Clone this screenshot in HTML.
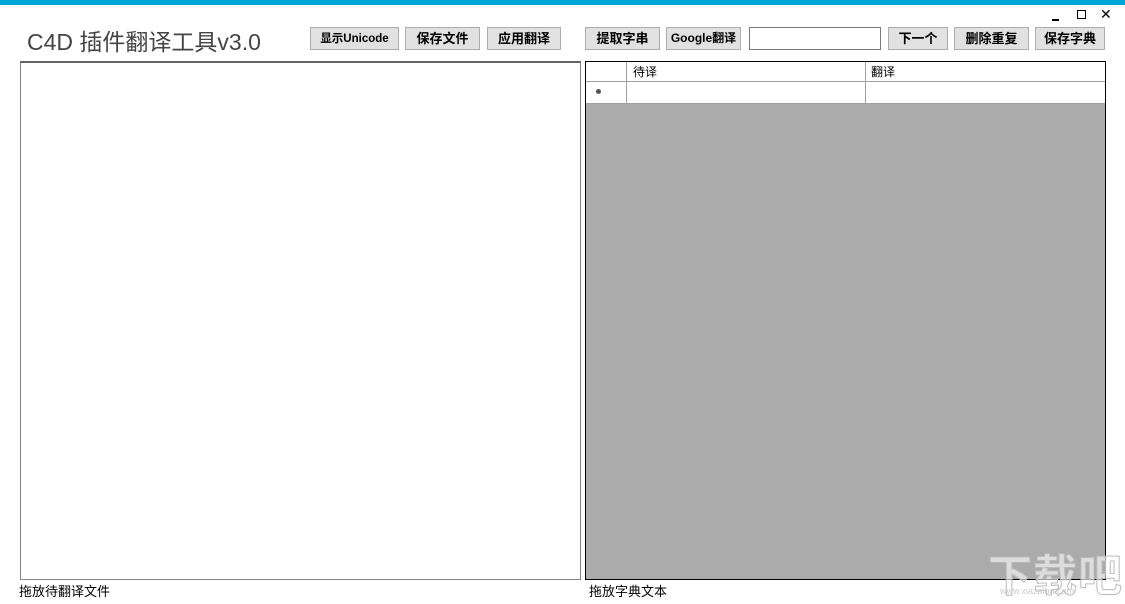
<!DOCTYPE html>
<html><head><meta charset="utf-8"><style>
*{margin:0;padding:0;box-sizing:border-box}
body{width:1125px;height:600px;background:#fff;position:relative;overflow:hidden;font-family:"Liberation Sans","Noto Sans CJK SC",sans-serif}
.a{position:absolute}
.btn{position:absolute;top:27px;height:23px;background:#e1e1e1;border:1px solid #adadad;font-size:13px;font-weight:bold;text-align:center;line-height:21px;color:#000;white-space:nowrap}
.st{font-size:13px;color:#000}
</style></head><body>
<div class="a" style="left:0;top:0;width:1125px;height:5px;background:#02a6d6"></div>
<div class="a" style="left:1052px;top:19px;width:7px;height:2px;background:#000"></div>
<div class="a" style="left:1077px;top:10px;width:9px;height:9px;border:1.5px solid #000"></div>
<div class="a" style="left:1100px;top:6px;font-size:14px">✕</div>
<div class="a" style="left:27px;top:23px;font-size:23px;color:#444;letter-spacing:0px">C4D 插件翻译工具v3.0</div>
<div class="btn" style="left:310px;width:89px;font-size:11.5px;line-height:23px">显示Unicode</div>
<div class="btn" style="left:405px;width:75px">保存文件</div>
<div class="btn" style="left:487px;width:74px">应用翻译</div>
<div class="btn" style="left:585px;width:75px">提取字串</div>
<div class="btn" style="left:666px;width:75px;font-size:12px">Google翻译</div>
<div class="a" style="left:749px;top:27px;width:132px;height:23px;border:1px solid #7a7a7a;background:#fff"></div>
<div class="btn" style="left:888px;width:60px">下一个</div>
<div class="btn" style="left:954px;width:75px">删除重复</div>
<div class="btn" style="left:1035px;width:70px">保存字典</div>
<div class="a" style="left:20px;top:61px;width:561px;height:519px;border:1px solid #828282;border-top:2px solid #646464;background:#fff"></div>
<div class="a" style="left:585px;top:61px;width:521px;height:519px;border:1px solid #000;background:#ababab">
 <div class="a" style="left:0;top:0;width:519px;height:42px;background:#fff"></div>
 <div class="a" style="left:0;top:19px;width:519px;height:1px;background:#a0a0a0"></div>
 <div class="a" style="left:0;top:41px;width:519px;height:1px;background:#a0a0a0"></div>
 <div class="a" style="left:40px;top:0;width:1px;height:42px;background:#a0a0a0"></div>
 <div class="a" style="left:279px;top:0;width:1px;height:42px;background:#a0a0a0"></div>
 <div class="a" style="left:47px;top:1px;font-size:12px">待译</div>
 <div class="a" style="left:285px;top:1px;font-size:12px">翻译</div>
 <div class="a" style="left:10px;top:27px;width:5px;height:5px;border-radius:50%;background:#555"></div>
</div>
<div class="a st" style="left:19px;top:581px">拖放待翻译文件</div>
<div class="a st" style="left:589px;top:581px">拖放字典文本</div>
<div class="a" style="left:988px;top:540px;font-size:44px;font-weight:bold;color:rgba(255,255,255,0.6);letter-spacing:1px;-webkit-text-stroke:1px #bbb">下载吧</div>
<div class="a" style="left:1000px;top:586px;font-size:9px;color:#ccc">www.xiazaiba.com</div>
</body></html>
